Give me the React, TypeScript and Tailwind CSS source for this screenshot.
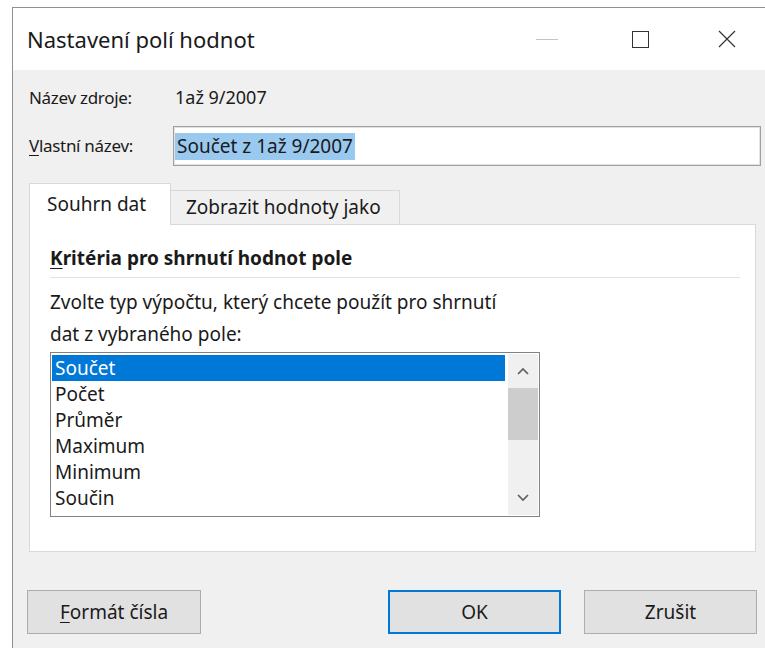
import React from "react";

const items = ["Součet", "Počet", "Průměr", "Maximum", "Minimum", "Součin"];

function Chevron({ up }: { up?: boolean }) {
  return (
    <svg width="14" height="10" viewBox="0 0 14 10" className="block">
      <path
        d={up ? "M2 8 L7 3 L12 8" : "M2 2 L7 7 L12 2"}
        fill="none"
        stroke="#606060"
        strokeWidth="1.7"
      />
    </svg>
  );
}

export default function App() {
  return (
    <div
      className="w-[765px] h-[648px] overflow-hidden bg-white text-[#1a1a1a]"
      style={{ fontFamily: '"Noto Sans", "Open Sans", sans-serif' }}
    >
      <div className="ml-[12px] mt-[7px] h-[700px] border-l border-t border-[#8f8f8f] flex flex-col">
        {/* title bar */}
        <div className="h-[62px] bg-white flex items-center pl-[14px]">
          <span className="text-[22px] leading-none">Nastavení polí hodnot</span>
          <div className="ml-auto flex items-center h-full">
            <div className="w-[22px] h-px bg-[#c4c4c4] mr-[74px]" />
            <div className="w-[17px] h-[17px] border border-[#333] mr-[69px]" />
            <svg width="18" height="18" viewBox="0 0 18 18" className="mr-[29px]">
              <path d="M1 1 L17 17 M17 1 L1 17" stroke="#333" strokeWidth="1.2" />
            </svg>
          </div>
        </div>

        {/* body */}
        <div className="flex-1 bg-[#f0f0f0] pl-[16px] pr-[4px] text-[19px]">
          <div className="h-[54px] flex items-center pt-[1px]">
            <span className="w-[146px] text-[17px] tracking-[-0.3px]">Název zdroje:</span>
            <span className="text-[18px]">1až 9/2007</span>
          </div>
          <div className="flex items-center mt-[2px]">
            <span className="w-[144px] text-[17px] tracking-[-0.3px]">
              <span className="underline underline-offset-[3px]">V</span>lastní název:
            </span>
            <div className="flex-1 h-[40px] bg-white border border-[#a0a0a0] shadow-[inset_0_0_0_1px_#e3e3e3] flex items-center pl-[1px]">
              <span className="bg-[#99c9ef] px-[2px] leading-[27px]">Součet z 1až 9/2007</span>
            </div>
          </div>

          {/* tabs */}
          <div className="mt-[16px] flex items-end h-[42px]">
            <div className="w-[142px] h-[42px] bg-white border-l border-t border-r border-[#d9d9d9] flex items-center pl-[17px] relative z-10 mb-[-1px] pb-[1px]">
              Souhrn dat
            </div>
            <div className="w-[229px] h-[34px] bg-[#f0f0f0] border-t border-r border-[#d9d9d9] flex items-center pl-[15px]">
              Zobrazit hodnoty jako
            </div>
          </div>
          <div className="w-[727px] h-[328px] bg-white border border-[#d9d9d9] pl-[20px] pr-[15px]">
            <div className="h-[53px] flex items-end pb-[5px] border-b border-[#e3e3e3] font-bold">
              <span>
                <span className="underline underline-offset-[3px]">K</span>ritéria pro shrnutí hodnot pole
              </span>
            </div>
            <div className="mt-[8px] leading-[32px]">
              Zvolte typ výpočtu, který chcete použít pro shrnutí
              <br />
              dat z vybraného pole:
            </div>
            <div className="mt-[2px] w-[490px] h-[165px] border border-[#828282] bg-white flex p-[1px]">
              <div className="flex-1 pt-[1px]">
                {items.map((it, i) => (
                  <div
                    key={it}
                    className={
                      "h-[26px] leading-[26px] pl-[3px] " +
                      (i === 0 ? "bg-[#0078d7] text-white" : "")
                    }
                  >
                    {it}
                  </div>
                ))}
              </div>
              <div className="w-[30px] ml-[3px] bg-[#f0f0f0] flex flex-col items-center">
                <div className="h-[34px] flex items-center justify-center">
                  <Chevron up />
                </div>
                <div className="w-full h-[52px] bg-[#cdcdcd]" />
                <div className="flex-1" />
                <div className="h-[34px] flex items-center justify-center">
                  <Chevron />
                </div>
              </div>
            </div>
          </div>

          {/* buttons */}
          <div className="mt-[38px] flex items-center">
            <button className="ml-[-2px] w-[174px] h-[44px] bg-[#e1e1e1] border border-[#adadad]">
              <span className="underline underline-offset-[3px]">F</span>ormát čísla
            </button>
            <button className="ml-[187px] w-[173px] h-[44px] bg-[#e1e1e1] border-2 border-[#0078d7]">
              OK
            </button>
            <button className="ml-[23px] w-[173px] h-[44px] bg-[#e1e1e1] border border-[#adadad]">
              Zrušit
            </button>
          </div>
        </div>
      </div>
    </div>
  );
}
